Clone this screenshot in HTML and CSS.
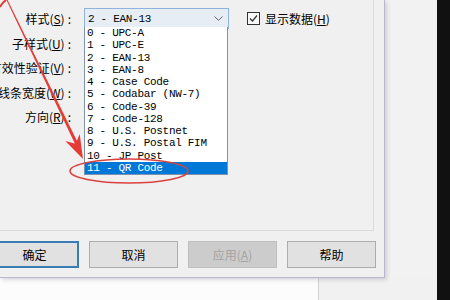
FILE: index.html
```html
<!DOCTYPE html>
<html lang="zh-CN">
<head>
    <meta charset="UTF-8">
    <meta name="viewport" content="width=device-width, initial-scale=1.0">
    <title>条形码属性</title>
    <link rel="stylesheet" href="styles.css">
</head>
<body>
    <div class="screen">
        <div class="desk">
            <div class="dialog">
                <div class="panel">
                    <div class="form">
                        <label class="field-label"><span>样式(<u>S</u>)</span><span class="colon">:</span></label>
                        <div class="combo">
                            <span>2 - EAN-13</span>
                            <svg class="chevron" width="9" height="5" viewBox="0 0 9 5"><path d="M0.5 0.5 L4.5 4.3 L8.5 0.5" fill="none" stroke="#666" stroke-width="1"/></svg>
                        </div>
                        <label class="check">
                            <span class="box"><svg width="11" height="11" viewBox="0 0 11 11"><path d="M2 5.5 L4.5 8 L9 2.5" fill="none" stroke="#333" stroke-width="1.2"/></svg></span>
                            <span>显示数据(<u>H</u>)</span>
                        </label>
                        <label class="field-label"><span>子样式(<u>U</u>)</span><span class="colon">:</span></label>
                        <div></div><div></div>
                        <label class="field-label"><span>有效性验证(<u>V</u>)</span><span class="colon">:</span></label>
                        <div></div><div></div>
                        <label class="field-label"><span>线条宽度(<u>W</u>)</span><span class="colon">:</span></label>
                        <div></div><div></div>
                        <label class="field-label"><span>方向(<u>R</u>)</span><span class="colon">:</span></label>
                        <div></div><div></div>
                    </div>

                    <!-- open list of the style combo -->
                    <ul class="dropdown">
                        <li>0 - UPC-A</li>
                        <li>1 - UPC-E</li>
                        <li>2 - EAN-13</li>
                        <li>3 - EAN-8</li>
                        <li>4 - Case Code</li>
                        <li>5 - Codabar (NW-7)</li>
                        <li>6 - Code-39</li>
                        <li>7 - Code-128</li>
                        <li>8 - U.S. Postnet</li>
                        <li>9 - U.S. Postal FIM</li>
                        <li>10 - JP Post</li>
                        <li class="selected">11 - QR Code</li>
                    </ul>
                </div>
                <div class="buttons">
                    <button class="default-btn">确定</button>
                    <button>取消</button>
                    <button class="disabled-btn" disabled>应用(<u>A</u>)</button>
                    <button>帮助</button>
                </div>
            </div>
            <div class="below">
                <div class="sheet"></div>
                <div class="rest"></div>
            </div>
        </div>

        <!-- red annotation drawn over the screenshot -->
        <svg class="annotation" width="450" height="300" viewBox="0 0 450 300">
            <path d="M0 7 Q2 3 6 0" fill="none" stroke="#e33b36" stroke-width="2"/>
            <polygon points="6.4,0 7.6,0 79.5,146 76.5,147" fill="#e53c36"/>
            <polygon points="83,159 65.3,140.9 75.6,143.7 79.7,133.9" fill="#e53c36"/>
            <ellipse cx="129" cy="171" rx="59" ry="12" fill="none" stroke="#d9433f" stroke-width="1.6"/>
        </svg>
    </div>
</body>
</html>
```

FILE: styles.css
```css
body {
    margin: 0;
    background: #111;
    font-family: "Noto Sans CJK SC", "Noto Sans", sans-serif;
    font-size: 12px;
    color: #000;
}
.screen {
    position: relative;
    width: 450px;
    height: 300px;
    overflow: hidden;
}
.desk {
    width: 437px;
    height: 300px;
    background: #f2f2f2;
    display: flex;
    flex-direction: column;
}
.dialog {
    position: relative;
    z-index: 1;
    width: 385px;
    height: 278px;
    box-sizing: border-box;
    background: #f0f0f0;
    border-right: 1px solid #bcb5cf;
    border-bottom: 1px solid #bcb5cf;
    box-shadow: 2px 2px 4px rgba(60, 50, 90, 0.18);
    display: flex;
    flex-direction: column;
}
.panel {
    position: relative;
    width: 374px;
    height: 231px;
    box-sizing: border-box;
    border-right: 1px solid #dadada;
    border-bottom: 1px solid #dadada;
}
.form {
    display: grid;
    grid-template-columns: 84px 145px 1fr;
    grid-auto-rows: 24.5px;
    padding-top: 6.5px;
}
.field-label {
    display: flex;
    justify-content: flex-end;
    align-items: center;
    padding-right: 13px;
    white-space: nowrap;
}
.colon {
    margin-left: 3px;
}
.combo {
    align-self: center;
    height: 21px;
    box-sizing: border-box;
    border: 1px solid #8fb3dc;
    background: #e6edf5;
    display: flex;
    align-items: center;
    justify-content: space-between;
    padding: 0 5px 0 3px;
    font-family: "Liberation Mono", monospace;
    font-size: 11px;
    letter-spacing: -0.3px;
}
.check {
    display: flex;
    align-items: center;
    gap: 5px;
    padding-left: 18px;
    white-space: nowrap;
}
.box {
    width: 13px;
    height: 13px;
    box-sizing: border-box;
    border: 1px solid #333;
    background: #f7f7f7;
    display: flex;
}
.dropdown {
    position: absolute;
    left: 84px;
    top: 27px;
    width: 144px;
    margin: 0;
    padding: 0;
    list-style: none;
    box-sizing: border-box;
    border: 1px solid #7d93ad;
    border-top: none;
    background: #fff;
    font-family: "Liberation Mono", monospace;
    font-size: 11px;
    letter-spacing: -0.3px;
}
.dropdown li {
    height: 12.25px;
    line-height: 12.25px;
    padding-left: 2px;
    white-space: nowrap;
}
.dropdown .selected {
    background: #0078d7;
    color: #fff;
}
.buttons {
    display: flex;
    gap: 10px;
    margin-left: -10px;
    padding-top: 10px;
}
.buttons button {
    width: 89px;
    height: 27px;
    box-sizing: border-box;
    border: 1px solid #adadad;
    background: #e1e1e1;
    font-family: "Noto Sans CJK SC", sans-serif;
    font-size: 12px;
    color: #000;
    padding: 0;
}
.buttons .default-btn {
    border: 2px solid #3a7cb8;
}
.buttons .disabled-btn {
    background: #cccccc;
    border-color: #bfbfbf;
    color: #a3a3a3;
}
.below {
    flex: 1;
    display: flex;
}
.sheet {
    width: 318px;
    background: #fcfcfc;
    border-right: 1px solid #d3d3d3;
}
.rest {
    flex: 1;
    background: #f1f1f1;
}
.annotation {
    position: absolute;
    z-index: 2;
    top: 0;
    left: 0;
    pointer-events: none;
}
```
